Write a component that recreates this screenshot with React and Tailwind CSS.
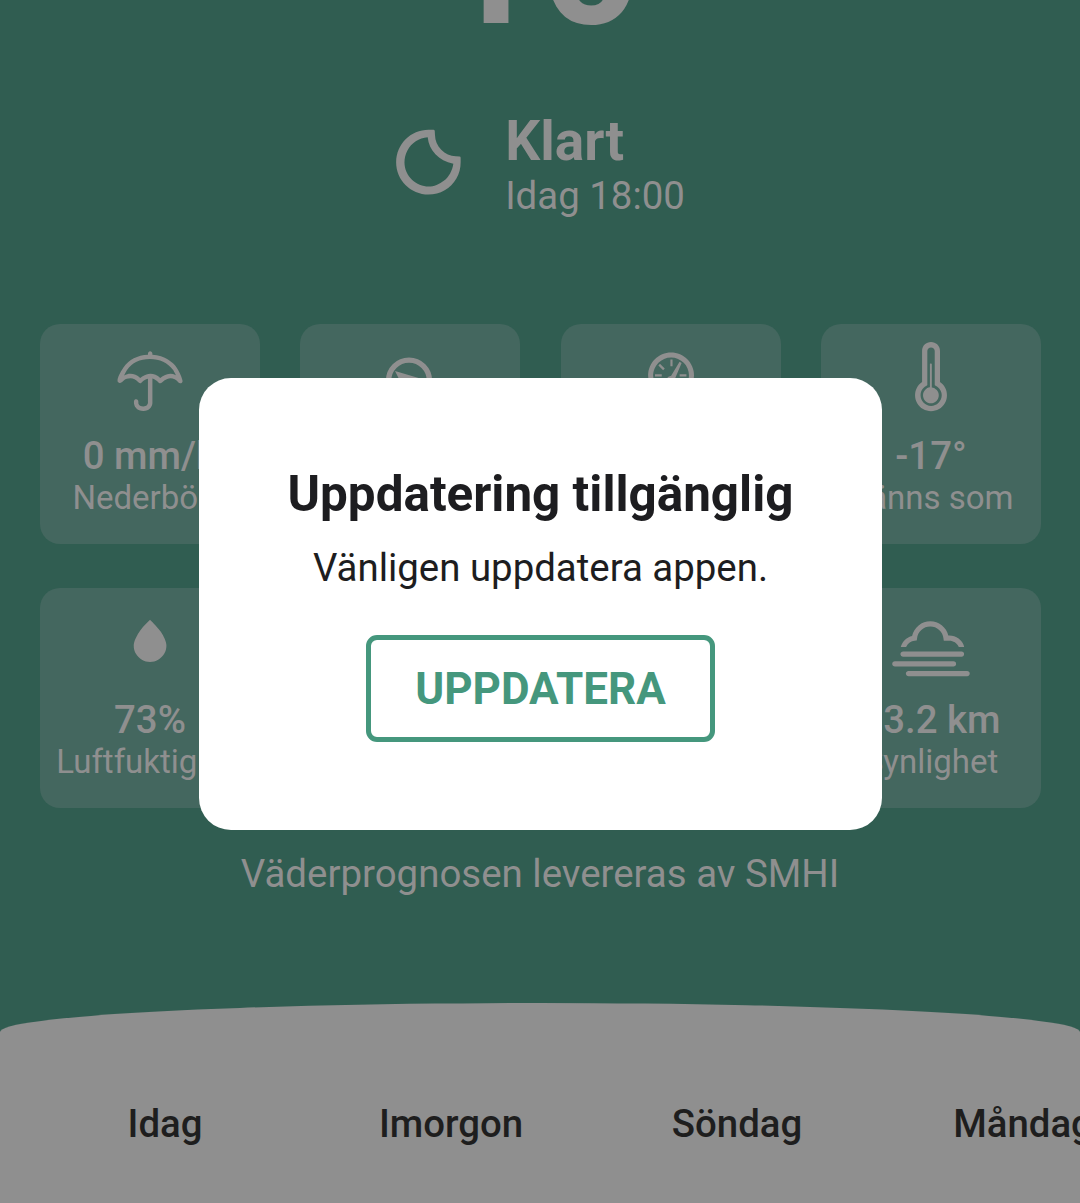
import React from "react";
import { WiNightClear, WiUmbrella, WiBarometer, WiThermometer, WiRaindrop, WiFog } from "react-icons/wi";

function WindDirection({ className }) {
  return (
    <svg viewBox="0 0 94 94" className={className} fill="none">
      <circle cx="46" cy="46.5" r="20.4" stroke="currentColor" strokeWidth="5.4" />
      <path d="M32 37 L59 45 L47.5 48.5 L43.5 60 Z" fill="currentColor" />
    </svg>
  );
}

const cards = [
  { id: "rain", Icon: WiUmbrella, value: "0 mm/h", label: "Nederbörd" },
  { id: "wind", Icon: WindDirection },
  { id: "pressure", Icon: WiBarometer },
  { id: "feels", Icon: WiThermometer, value: "-17°", label: "Känns som" },
  { id: "humidity", Icon: WiRaindrop, value: "73%", label: "Luftfuktighet" },
  { id: "clouds" },
  { id: "sun" },
  { id: "visibility", Icon: WiFog, value: "13.2 km", label: "Synlighet" },
];

const days = ["Idag", "Imorgon", "Söndag", "Måndag"];

function Card({ Icon, value, label }) {
  return (
    <div className="flex h-[220px] flex-col items-center overflow-hidden rounded-[20px] bg-[#44675f] whitespace-nowrap">
      {Icon && <Icon className="mt-[10px] h-[94px] w-[94px] shrink-0" />}
      {value && <div className="mt-[6px] text-[38.4px] leading-[44px] font-medium">{value}</div>}
      {label && <div className="text-[33px] leading-[40px]">{label}</div>}
    </div>
  );
}

export default function App() {
  return (
    <div className="relative flex h-[1203px] w-[1080px] flex-col overflow-hidden bg-[#305d51] font-['Roboto',sans-serif] text-[#8f8f8f]">
      <div className="-mt-[163px] h-[252px] text-center text-[176px] leading-[252px] font-bold">-10°</div>
      <div className="mt-[22px] flex h-[108px] justify-center gap-[8px] pr-[35px]">
        <WiNightClear className="-mt-[15px] h-[137px] w-[137px]" />
        <div className="flex flex-col">
          <div className="text-[55px] leading-[60px] font-bold">Klart</div>
          <div className="mt-[2px] text-[38.4px] leading-[46px]">Idag 18:00</div>
        </div>
      </div>
      <div className="mr-[39px] ml-[40px] mt-[105px] grid grid-cols-[repeat(4,220px)] justify-between gap-y-[44px]">
        {cards.map((c) => (
          <Card key={c.id} Icon={c.Icon} value={c.value} label={c.label} />
        ))}
      </div>
      <div className="mt-[43px] text-center text-[38.45px] leading-[46px]">Väderprognosen levereras av SMHI</div>
      <div className="mt-auto h-[200px] shrink-0 rounded-t-[50%_29px] bg-[#8f8f8f] pt-[98px]">
        <div className="ml-[22px] flex w-[1144px] text-[38.4px] leading-[46px] font-medium text-[#1e1e1e]">
          {days.map((d) => (
            <div key={d} className="w-[286px] text-center">{d}</div>
          ))}
        </div>
      </div>

      <div className="absolute top-[378px] left-[199px] flex h-[452px] w-[683px] flex-col items-center rounded-[32px] bg-white pt-[86px] text-[#1d1d20]">
        <h1 className="text-[49.4px] leading-[60px] font-bold">Uppdatering tillgänglig</h1>
        <p className="mt-[21px] text-[38.4px] leading-[46px]">Vänligen uppdatera appen.</p>
        <button className="mt-[44px] h-[107px] w-[349px] rounded-[11px] border-[5px] border-[#45977d] text-[44px] font-bold text-[#45977d]">UPPDATERA</button>
      </div>
    </div>
  );
}
